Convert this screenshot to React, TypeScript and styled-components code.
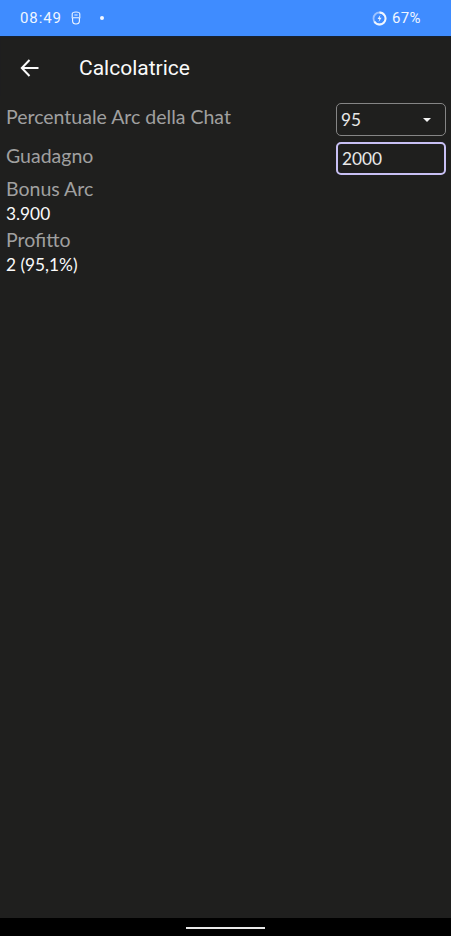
import React from "react";
import styled, { createGlobalStyle } from "styled-components";

const Global = createGlobalStyle`
  html, body { margin: 0; padding: 0; background: #1f1f1e; }
  #root { width: 451px; height: 936px; }
`;

const Screen = styled.div`
  width: 451px;
  height: 936px;
  display: flex;
  flex-direction: column;
  background: #1f1f1e;
  overflow: hidden;
  font-family: Lato, sans-serif;
`;

const StatusBar = styled.div`
  height: 36px;
  flex: none;
  background: #3f8cff;
  display: flex;
  align-items: center;
  justify-content: space-between;
  box-sizing: border-box;
  padding: 0 30px 0 20px;
  color: #f0f6ff;
  font-family: Roboto, sans-serif;
  font-size: 15px;
  font-weight: 400;
  letter-spacing: 0.4px;
`;

const StatusGroup = styled.div`
  display: flex;
  align-items: center;
`;

const Clock = styled.span`
  letter-spacing: 0.9px;
`;

const StatusDot = styled.span`
  width: 4px;
  height: 4px;
  border-radius: 50%;
  background: #f4f8ff;
  margin-left: 18px;
`;

const AppBar = styled.div`
  height: 60px;
  flex: none;
  display: flex;
  align-items: center;
  box-sizing: border-box;
  padding: 3px 0 0 20px;
  box-shadow: inset 0 2px 2px -1px #142238;
  color: #fafafa;
`;

const Title = styled.div`
  margin-left: 39px;
  font-family: Roboto, sans-serif;
  font-size: 21px;
  font-weight: 400;
`;

const Content = styled.div`
  flex: 1;
  display: flex;
  flex-direction: column;
  box-sizing: border-box;
  padding: 7px 5px 0 6px;
`;

const FieldRow = styled.div<{ $height: number }>`
  display: flex;
  align-items: flex-start;
  justify-content: space-between;
  height: ${(p) => p.$height}px;
`;

const Label = styled.div`
  color: #a0a0a0;
  font-size: 19.5px;
  line-height: 27px;
`;

const Value = styled.div`
  color: #fafafa;
  font-size: 17.3px;
  line-height: 23px;
  margin-bottom: 1px;
`;

const Box = styled.div<{ $focused?: boolean }>`
  width: 110px;
  height: 33px;
  box-sizing: border-box;
  display: flex;
  align-items: center;
  justify-content: space-between;
  padding: 0 14px 0 4px;
  border-radius: 5px;
  border: ${(p) => (p.$focused ? "2px solid #c8c0f4" : "1.5px solid #858585")};
  color: #e8e8e8;
  font-size: 17.3px;
`;

const Caret = styled.span`
  width: 0;
  height: 0;
  border-left: 4.5px solid transparent;
  border-right: 4.5px solid transparent;
  border-top: 4.5px solid #f4f4f4;
`;

const NavBar = styled.div`
  height: 18px;
  flex: none;
  background: #000;
  display: flex;
  justify-content: center;
  padding-top: 9px;
  box-sizing: border-box;
`;

const NavPill = styled.div`
  width: 79px;
  height: 2px;
  background: #e8e8e8;
`;

export default function App() {
  return (
    <Screen>
      <Global />
      <StatusBar>
        <StatusGroup>
          <Clock>08:49</Clock>
          <svg width="12" height="14" viewBox="0 0 12 14" style={{ marginLeft: 8 }} fill="none" stroke="#f0f6ff" strokeWidth="1.1">
            <path d="M2.2 6 V3 C2.2 1.7 3.5 1 6 1 C8.5 1 9.8 1.7 9.8 3 V6 M1.5 6.8 H10.5 M2.6 6.8 V10 C2.6 12 4.2 13 6 13 C7.8 13 9.4 12 9.4 10 V6.8 M4.4 4 H7.6" />
          </svg>
          <StatusDot />
        </StatusGroup>
        <StatusGroup>
          <svg width="15" height="15" viewBox="0 0 15 15" style={{ marginRight: 5 }} fill="none">
            <circle cx="7.5" cy="7.5" r="6" stroke="#9cc2ff" strokeWidth="1.8" />
            <path d="M7.5 1.5 A6 6 0 1 1 2.3 10.5" stroke="#f0f6ff" strokeWidth="1.8" />
            <path d="M8.4 3.8 L5.6 8 H7.4 L6.6 11 L9.6 6.8 H7.7 Z" fill="#f0f6ff" />
          </svg>
          67%
        </StatusGroup>
      </StatusBar>
      <AppBar>
        <svg width="20" height="20" viewBox="0 0 20 20" fill="none" stroke="#fafafa" strokeWidth="2">
          <path d="M18.5 10 H2 M9.5 2 L1.8 10 L9.5 18" />
        </svg>
        <Title>Calcolatrice</Title>
      </AppBar>
      <Content>
        <FieldRow $height={39}>
          <Label>Percentuale Arc della Chat</Label>
          <Box>
            95
            <Caret />
          </Box>
        </FieldRow>
        <FieldRow $height={33}>
          <Label>Guadagno</Label>
          <Box $focused>2000</Box>
        </FieldRow>
        <Label>Bonus Arc</Label>
        <Value>3.900</Value>
        <Label>Profitto</Label>
        <Value>2 (95,1%)</Value>
      </Content>
      <NavBar>
        <NavPill />
      </NavBar>
    </Screen>
  );
}
